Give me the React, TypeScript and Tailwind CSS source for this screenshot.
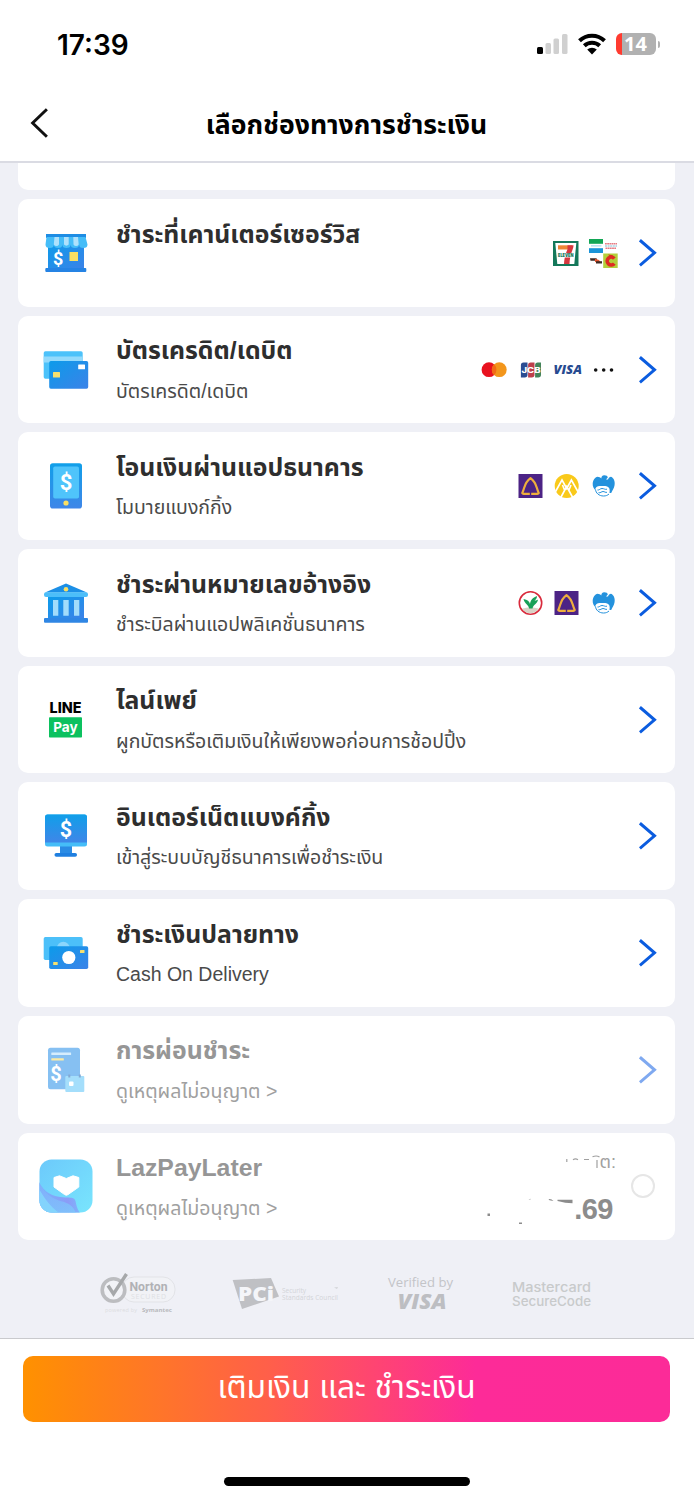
import type { ReactNode } from "react";

interface PaymentMethod {
  id: string;
  title: string;
  subtitle?: string;
  icon: ReactNode;
  logos?: ReactNode[];
  disabled?: boolean;
}

// ---------- shared ----------

function Gradients() {
  return (
    <svg className="absolute h-0 w-0">
      <defs>
        <linearGradient id="blue" x1="0" y1="0" x2="1" y2="1">
          <stop offset="0" stopColor="#0c9bea" />
          <stop offset="1" stopColor="#3b82e8" />
        </linearGradient>
        <linearGradient id="blueDown" x1="0" y1="0" x2="0" y2="1">
          <stop offset="0" stopColor="#109fe9" />
          <stop offset="1" stopColor="#3f86e8" />
        </linearGradient>
        <linearGradient id="laz" x1="0" y1="0" x2="1" y2="1">
          <stop offset="0" stopColor="#6cc9fb" />
          <stop offset="1" stopColor="#79e5fd" />
        </linearGradient>
        <linearGradient id="lazWave" x1="0" y1="0" x2="1" y2="0">
          <stop offset="0" stopColor="#78b4fb" />
          <stop offset="0.7" stopColor="#8b9cf7" />
          <stop offset="1" stopColor="#7fb4fb" />
        </linearGradient>
        <linearGradient id="lazFold" x1="0" y1="0" x2="0.6" y2="1">
          <stop offset="0" stopColor="#86a9fb" />
          <stop offset="1" stopColor="#7ccbfc" />
        </linearGradient>
      </defs>
    </svg>
  );
}

function IconBox({ children }: { children: ReactNode }) {
  return (
    <svg viewBox="0 0 60 60" className="h-[60px] w-[60px] shrink-0">
      {children}
    </svg>
  );
}

function LogoBox({ children }: { children: ReactNode }) {
  return (
    <svg viewBox="0 0 28 28" className="h-7 w-7 shrink-0 overflow-visible">
      {children}
    </svg>
  );
}

function Dollar({ x, y, size = 20 }: { x: number; y: number; size?: number }) {
  return (
    <text
      x={x}
      y={y + size * 0.35}
      textAnchor="middle"
      fontSize={size}
      fontWeight="700"
      fill="#fff"
      fontFamily="Roboto, sans-serif"
    >
      $
    </text>
  );
}

function Chevron({ disabled }: { disabled?: boolean }) {
  return (
    <svg viewBox="0 0 18 28" className="h-7 w-[18px] shrink-0" fill="none">
      <path d="M.9 1.200 15.500 13.800.9 26.400" stroke={disabled ? "#7fa9f0" : "#0b5cdf"} strokeWidth="3" />
    </svg>
  );
}

// ---------- method icons ----------

const storeIcon = (
  <IconBox>
    <path d="M12 20h36v26H12z" fill="url(#blue)" />
    <rect x="9.300" y="45" width="41" height="4" rx="1" fill="#2583e4" />
    <path d="M10 11h40v4H10z" fill="#1e8de4" />
    <path d="M10.500 14h39l2 7.500a4.200 3.500 0 0 1-8.400 0 4.200 3.500 0 0 1-8.400 0 4.200 3.500 0 0 1-8.400 0 4.200 3.500 0 0 1-8.400 0 4.200 3.500 0 0 1-8.400 0z" fill="#45bdf8" />
    <path d="M18.500 14h4.500v7.500a3 3 0 0 1-5.200 0zM28 14h4.700v7.500a3 3 0 0 1-4.700 0zM37.300 14H42l.7 7.500a3 3 0 0 1-5.200 0z" fill="#aee1fc" />
    <Dollar x={22.200} y={35.500} size={18} />
    <rect x="33.500" y="29" width="8.500" height="9" fill="#fbdf62" />
  </IconBox>
);

const cardsIcon = (
  <IconBox>
    <rect x="7.700" y="11.200" width="39" height="27.500" rx="1.700" fill="#4cc2fa" />
    <path d="M7.700 16.500h39v6h-39z" fill="#93dafc" />
    <rect x="13.200" y="21" width="39" height="27.800" rx="1.700" fill="url(#blue)" />
    <rect x="42.200" y="24.500" width="6.800" height="4.800" rx="0.500" fill="#fff" />
    <rect x="17" y="32" width="7" height="5.500" rx="0.500" fill="#f7e06f" />
  </IconBox>
);

const mobileIcon = (
  <IconBox>
    <rect x="14" y="7.200" width="32" height="45.300" rx="2.800" fill="url(#blueDown)" />
    <rect x="17.200" y="10.500" width="25.800" height="32" rx="1.800" fill="#4fc4fb" />
    <Dollar x={30} y={26} size={22} />
    <circle cx="30" cy="47" r="2.600" fill="#fbdf62" />
  </IconBox>
);

const bankIcon = (
  <IconBox>
    <path d="M30 10.500 51 19.500H9z" fill="#1c8fe6" />
    <rect x="8" y="19.300" width="44" height="4.700" rx="2" fill="#4cbef9" />
    <path d="M12 24h36v21H12z" fill="url(#blue)" />
    <path d="M17 27h5.300v15.700H17zM27.300 27h5.400v15.700h-5.400zM38 27h5.300v15.700H38z" fill="#a2dcfb" />
    <rect x="8" y="45" width="44" height="4.700" rx="1" fill="#2f86e4" />
    <circle cx="30" cy="16.200" r="2.300" fill="#fbdf62" />
  </IconBox>
);

const linePayIcon = (
  <IconBox>
    <text x="13.500" y="23.300" fontSize="14" fontWeight="800" textLength="32" lengthAdjust="spacingAndGlyphs" fill="#000" fontFamily="Inter, sans-serif">
      LINE
    </text>
    <rect x="13" y="27.300" width="33" height="20.200" rx="0.800" fill="#0cc15f" />
    <text x="17.200" y="42" fontSize="13.500" fontWeight="700" textLength="24.500" lengthAdjust="spacingAndGlyphs" fill="#fff" fontFamily="Inter, sans-serif">
      Pay
    </text>
  </IconBox>
);

const monitorIcon = (
  <IconBox>
    <path d="M24 40h12v7H24z" fill="#2a8be4" />
    <rect x="18.500" y="47" width="22.500" height="3.700" rx="1.800" fill="#1f7fe0" />
    <rect x="9" y="8.500" width="42" height="32" rx="2.500" fill="#45bdf8" />
    <path d="M9 11a2.500 2.500 0 0 1 2.500-2.500h37A2.500 2.500 0 0 1 51 11v25.500H9z" fill="url(#blueDown)" />
    <Dollar x={30} y={23} size={21.500} />
  </IconBox>
);

const cashIcon = (
  <IconBox>
    <rect x="7.700" y="14" width="39" height="23" rx="1.700" fill="#4cc0f9" />
    <circle cx="27.300" cy="25.300" r="6.500" fill="#8bd6fc" />
    <rect x="13.200" y="23.300" width="39" height="22.700" rx="1.700" fill="url(#blue)" />
    <circle cx="32.800" cy="34.500" r="6.600" fill="#fff" />
    <rect x="44" y="27" width="4.500" height="3" rx="0.500" fill="#f7e06f" />
    <rect x="17.200" y="39" width="4.500" height="3" rx="0.500" fill="#f7e06f" />
  </IconBox>
);

const installmentIcon = (
  <IconBox>
    <rect x="12" y="7.700" width="32" height="41.500" rx="2.500" fill="#86c0f2" />
    <rect x="15.300" y="12.500" width="19.800" height="2.400" rx="0.500" fill="#d5edfd" />
    <rect x="15.300" y="18.200" width="12.500" height="2.400" rx="0.500" fill="#fbeba5" />
    <Dollar x={20} y={33.500} size={20} />
    <rect x="29.300" y="36" width="19" height="16" rx="1" fill="#a4defb" />
    <path d="M33.300 34.500v3M43.800 34.500v3" stroke="#83a9d4" strokeWidth="2" />
    <rect x="33" y="41.500" width="4.500" height="4.500" rx="1" fill="#fff" />
  </IconBox>
);

const lazIcon = (
  <IconBox>
    <clipPath id="lazClip">
      <rect x="3.500" y="3.500" width="53" height="53" rx="12" />
    </clipPath>
    <g clipPath="url(#lazClip)">
      <path d="M3 3h54v54H3z" fill="url(#laz)" />
      <path d="M3 26c5 10 13 15 26 15.500 5 .2 9.500-.5 10.500 3.500.8 4 1.500 8 4.500 12H3z" fill="url(#lazWave)" />
      <path d="M3 26c5 12 14 17 23 19.500 6 1.500 11 4 14 11.500H3z" fill="url(#lazFold)" opacity="0.700" />
      <path d="M3 33c6 10 11 17 20 24H3z" fill="#84d9fd" opacity="0.800" />
    </g>
    <path d="M18 21.500 23.500 19.800 30.300 22.500 37 19.800 42.800 21.500V31L32 38.600Q30.300 39.900 28.600 38.600L18 31z" fill="#fff" stroke="#fff" strokeWidth="1" strokeLinejoin="round" />
  </IconBox>
);

// ---------- brand logos ----------

const sevenElevenLogo = (
  <LogoBox>
    <path d="M0 2h25.500v25H0z" fill="#14785a" />
    <path d="M2.300 4h21l-2 21H4.300z" fill="#fff" />
    <path d="M5 6.300h14v4.200H5z" fill="#ee8636" />
    <path d="M14.500 6.300h6c0 5-3.500 7-4 18.700h-5.500c.3-7 2-11 3.500-14.700z" fill="#d6383f" />
    <path d="M4.500 14.200h16.500v4.300H4.500z" fill="#fff" />
    <text x="5" y="18.200" fontSize="5.300" fontWeight="900" textLength="15.500" lengthAdjust="spacingAndGlyphs" fill="#14785a" fontFamily="Inter, sans-serif">
      ELEVEN
    </text>
  </LogoBox>
);

const storesLogo = (
  <LogoBox>
    <path d="M-1 0h14v4.800H-1z" fill="#12a655" />
    <path d="M1 6.900h10.500" stroke="#7cc8e8" strokeWidth="0.800" />
    <path d="M-1 9.200h14v4.800H-1z" fill="#1a94d8" />
    <path d="M15 4.800h12M15.500 9.200h10.500" stroke="#e57b84" strokeWidth="1.600" strokeDasharray="1.800 .4" />
    <path d="M15 7h12" stroke="#79bdd5" strokeWidth="1" strokeDasharray="2 .6" />
    <path d="M0 19.200h6.500l1 2.600H.5z" fill="#3d2a24" />
    <path d="M5 19.800 9 21l2 3-6-1z" fill="#e8552d" />
    <path d="M6 22.200h6v2.300H6z" fill="#3d2a24" />
    <path d="M13.200 14.500h14.500V29H13.200z" fill="#b3cf3b" />
    <path d="M24.300 19.500a4 4 0 1 0 0 5" fill="none" stroke="#df2b22" strokeWidth="3.600" />
    <path d="M18 15.500l5 .8-2 2.500z" fill="#df2b22" />
  </LogoBox>
);

const mastercardLogo = (
  <LogoBox>
    <circle cx="9" cy="13.700" r="7.400" fill="#e8121f" />
    <circle cx="19.300" cy="13.700" r="7.400" fill="#f3961c" />
    <path d="M14.100 8.300a7.400 7.400 0 0 1 0 10.800 7.400 7.400 0 0 1 0-10.800z" fill="#f26a16" />
  </LogoBox>
);

const jcbLogo = (
  <LogoBox>
    <path d="M6.500 6.500h4v12.300a2.700 2.700 0 0 1-2.700 2.700H3.900V9.200a2.700 2.700 0 0 1 2.600-2.700z" fill="#2b4d92" />
    <path d="M13.700 6.500h3.800v12.300a2.700 2.700 0 0 1-2.700 2.700h-3.700V9.200a2.700 2.700 0 0 1 2.600-2.700z" fill="#bd3f4b" />
    <path d="M20.800 6.500H24v12.300a2.700 2.700 0 0 1-2.700 2.700h-3.200V9.200a2.700 2.700 0 0 1 2.600-2.700z" fill="#43845a" />
    <text x="4.500" y="16.900" fontSize="7.600" fontWeight="800" textLength="19" lengthAdjust="spacingAndGlyphs" fill="#fff" fontFamily="Inter, sans-serif">
      JCB
    </text>
  </LogoBox>
);

const visaLogo = (
  <LogoBox>
    <text x="0.500" y="18.200" fontSize="12.500" fontWeight="800" fontStyle="italic" textLength="28.500" lengthAdjust="spacingAndGlyphs" fill="#274b91" fontFamily="Open Sans, sans-serif">
      VISA
    </text>
  </LogoBox>
);

const moreLogo = (
  <LogoBox>
    <circle cx="5.700" cy="14" r="1.800" fill="#111" />
    <circle cx="13.700" cy="14" r="1.800" fill="#111" />
    <circle cx="21.500" cy="14" r="1.800" fill="#111" />
  </LogoBox>
);

const scbLogo = (
  <LogoBox>
    <path d="M1.500 2h24v24h-24z" fill="#4c2385" />
    <path d="M12.800 21.800H6.600c-1.400 0-1.600-.8-1-1.700 2.200-4 1.400-9.300 7.900-14 6.500 4.700 5.700 10 7.900 14 .6.900.4 1.700-1 1.700h-6.200" fill="none" stroke="#eeae3d" strokeWidth="2.200" strokeLinejoin="round" />
  </LogoBox>
);

const krungsriLogo = (
  <LogoBox>
    <circle cx="13.700" cy="14" r="12" fill="#f9c91a" />
    <path d="M2 20.500 9 8l4.700 8.500L18.400 8l7 12.500M7.500 26l6.200-11.500L20 26M9.500 13l2 5M18 13l-2 5" fill="none" stroke="#fff" strokeWidth="1.600" />
  </LogoBox>
);

const krungthaiLogo = (
  <LogoBox>
    <path d="M7.500 4.700C9 4.700 10.500 5.500 11.300 6.500c0-2 .9-3.300 3-3.300 2 0 3.300.8 3.500 2.300L16 7.500h2c.8-1.700 1.500-2.700 3-2.700C24 6 25.300 10 24.500 13.500c-.5 3-2 4.500-3.300 7.500h-1.700c.5-3.500.2-5.500-2.300-6.500-3-1-5-.3-7.500-.5-2.500 0-4.500 1.500-4.500 4C3.700 16.500 2.500 14.500 2.700 11.500 3 8 5 5.200 7.500 4.700z" fill="#2492dd" />
    <path d="M5.500 17.500c.3 3.500 3.500 6.500 8 6.500 2.500 0 4-.7 5.500-2M7.500 18c2 .3 2.500-1.500 4.500-1.500s3 1.300 5 .7M8.500 20.700c2 .5 3-1.200 4.500-1.200s2.500 1.300 4 .8" fill="none" stroke="#2492dd" strokeWidth="1" />
  </LogoBox>
);

const kbankLogo = (
  <LogoBox>
    <circle cx="13.500" cy="14" r="11.200" fill="#fff" stroke="#d92a3c" strokeWidth="1.600" />
    <path d="M5.500 19.500c4-1.500 12-1.500 16 0-2 3.500-5 4.700-8 4.700s-6.500-1.200-8-4.700z" fill="#d8d2c6" />
    <path d="M12 19.500c0-3.500-4.500-4.500-5.500-9.500 4 .5 6 2.500 6.500 5 .5-3.500 2.500-6.500 7-8 0 2-1 3.500-2.500 4.500 1.500 0 2.500-.3 3.500-1-.5 4.500-5 5-5.500 9z" fill="#18a058" />
  </LogoBox>
);

const methods: PaymentMethod[] = [
  {
    id: "counter",
    title: "ชำระที่เคาน์เตอร์เซอร์วิส",
    icon: storeIcon,
    logos: [sevenElevenLogo, storesLogo],
  },
  {
    id: "card",
    title: "บัตรเครดิต/เดบิต",
    subtitle: "บัตรเครดิต/เดบิต",
    icon: cardsIcon,
    logos: [mastercardLogo, jcbLogo, visaLogo, moreLogo],
  },
  {
    id: "mobile",
    title: "โอนเงินผ่านแอปธนาคาร",
    subtitle: "โมบายแบงก์กิ้ง",
    icon: mobileIcon,
    logos: [scbLogo, krungsriLogo, krungthaiLogo],
  },
  {
    id: "bill",
    title: "ชำระผ่านหมายเลขอ้างอิง",
    subtitle: "ชำระบิลผ่านแอปพลิเคชั่นธนาคาร",
    icon: bankIcon,
    logos: [kbankLogo, scbLogo, krungthaiLogo],
  },
  {
    id: "linepay",
    title: "ไลน์เพย์",
    subtitle: "ผูกบัตรหรือเติมเงินให้เพียงพอก่อนการช้อปปิ้ง",
    icon: linePayIcon,
  },
  {
    id: "internet",
    title: "อินเตอร์เน็ตแบงค์กิ้ง",
    subtitle: "เข้าสู่ระบบบัญชีธนาคารเพื่อชำระเงิน",
    icon: monitorIcon,
  },
  {
    id: "cod",
    title: "ชำระเงินปลายทาง",
    subtitle: "Cash On Delivery",
    icon: cashIcon,
  },
  {
    id: "installment",
    title: "การผ่อนชำระ",
    subtitle: "ดูเหตุผลไม่อนุญาต >",
    icon: installmentIcon,
    disabled: true,
  },
];

function MethodText({ title, subtitle, disabled }: Partial<PaymentMethod>) {
  return (
    <div className="ml-5 flex h-full flex-1 flex-col whitespace-nowrap pt-[17.500px]">
      <div className={`h-9 text-[24.800px] leading-9 font-bold ${disabled ? "text-[#969696]" : "text-[#2e2e2e]"}`}>
        {title}
      </div>
      <div className={`mt-[6.500px] h-[30px] text-[19.500px] leading-[30px] ${disabled ? "text-[#a0a0a0]" : "text-[#4a4a4a]"}`}>
        {subtitle}
      </div>
    </div>
  );
}

function MethodCard({ method }: { method: PaymentMethod }) {
  return (
    <div className="flex h-[107.700px] shrink-0 items-center rounded-[10px] bg-white pr-[18.500px] pl-[18px]">
      {method.icon}
      <MethodText {...method} />
      <div className="mr-[20.500px] flex gap-[8.600px]">
        {method.logos?.map((logo, i) => <span key={i}>{logo}</span>)}
      </div>
      <Chevron disabled={method.disabled} />
    </div>
  );
}

function LazPayLaterCard() {
  return (
    <div className="flex h-[107.700px] shrink-0 items-center rounded-[10px] bg-white pr-5 pl-[18px]">
      {lazIcon}
      <MethodText title="LazPayLater" subtitle="ดูเหตุผลไม่อนุญาต >" disabled />
      <div className="mr-[15px] flex h-full w-[132px] flex-col items-end pt-[15px]">
        <div className="flex h-[30px] items-center text-[18px] text-[#a0a0a0]">
          {/* only the tips of the leading letters show */}
          <svg viewBox="0 0 34 24" className="h-6 w-[34px]" fill="none" stroke="#a0a0a0">
            <path d="M.8 8v3M7 8.700q2.500-1.500 5 0M18 8.500h5" strokeWidth="1.200" />
            <path d="M26.500 5.800q4-1.700 7 .2M31 9v8" strokeWidth="1.200" />
          </svg>
          <span>ต:</span>
        </div>
        <div className="mt-[14px] flex h-9 w-full items-center justify-end pr-[3px] text-[29px] font-bold tracking-[-0.500px] text-[#8c8c8c]">
          <svg viewBox="0 0 88 36" className="h-9 w-[88px]">
            <path d="M1.500 21.500H4V24H1.500zM33 30.500h3V32h-3zM42.500 7.500l2-.8v.8zM62.500 7q3-.5 5 2l-4-.7zM71.500 7.700h15v3.500q-7 0-15-2.200z" fill="#8c8c8c" />
          </svg>
          <span>.69</span>
        </div>
      </div>
      <span className="h-6 w-6 shrink-0 rounded-full border-2 border-[#e6e6e6]" />
    </div>
  );
}

function StatusBar() {
  return (
    <div className="flex h-[88px] items-center justify-between pr-[34px] pl-[57px]">
      <span className="pt-px font-['Inter'] text-[28px] font-semibold text-black">17:39</span>
      <div className="flex items-center gap-[9.500px]">
        <svg viewBox="0 0 31 22" className="h-[22px] w-[31px] overflow-visible">
          <rect x="-1" y="14" width="6" height="7" rx="1.500" fill="#000" />
          <rect x="7.500" y="10" width="5.500" height="11" rx="1.500" fill="#d0d0d0" />
          <rect x="15.500" y="5.500" width="5.500" height="15.500" rx="1.500" fill="#d0d0d0" />
          <rect x="24" y="1" width="5.500" height="20" rx="1.500" fill="#d0d0d0" />
        </svg>
        <svg viewBox="0 0 28 22" className="h-[22px] w-7">
          <path d="M1.500 7.800a18 18 0 0 1 25 0M6.300 12.800a11.300 11.300 0 0 1 15.400 0" fill="none" stroke="#000" strokeWidth="4" />
          <path d="M9.200 16.500a7.300 7.300 0 0 1 9.600 0L14 21.500z" fill="#000" />
        </svg>
        <div className="flex items-center gap-0.5">
          <div className="flex h-[22px] w-10 items-center justify-center rounded-[6px] border-l-[6px] border-[#ff3b30] bg-[#b1b1b1]">
            <span className="pr-1.5 font-['Open_Sans'] text-[20px] leading-none font-bold text-white">14</span>
          </div>
          <span className="h-[7px] w-[2.500px] rounded-r-full bg-[#b1b1b1]" />
        </div>
      </div>
    </div>
  );
}

function TrustBadges() {
  return (
    <div className="flex h-[106px] shrink-0 items-center pl-[82px]">
      {/* Norton */}
      <svg viewBox="0 0 80 44" className="h-11 w-20" fontFamily="Open Sans, sans-serif">
        <rect x="22" y="6" width="53" height="25" rx="12" fill="#f1f2f6" stroke="#e2e3e7" />
        <circle cx="13.500" cy="19" r="11.300" fill="#f2f3f7" stroke="#bcbdc0" strokeWidth="3.600" />
        <path d="M8 14.500l5.500 8.500L26.500 3" fill="none" stroke="#a6a8aa" strokeWidth="3.400" />
        <text x="29.500" y="19.500" fontSize="12" fontWeight="700" textLength="38" lengthAdjust="spacingAndGlyphs" fill="#b0b1b5" fontFamily="Roboto, sans-serif">Norton</text>
        <text x="31" y="28" fontSize="7" textLength="35" fill="#dedfe3">SECURED</text>
        <text x="5" y="41" fontSize="5.500" textLength="32" fill="#dcdde1">powered by</text>
        <text x="42" y="41" fontSize="6" fontWeight="700" textLength="30" lengthAdjust="spacingAndGlyphs" fill="#b9babd">Symantec</text>
      </svg>
      {/* PCI */}
      <svg viewBox="0 0 112 44" className="ml-[52px] h-11 w-28" fontFamily="Open Sans, sans-serif">
        <path d="M.7 9 39 7l8 18.500L10 38z" fill="#bfc0c4" />
        <text x="6" y="30" fontSize="20" fontWeight="800" textLength="36" lengthAdjust="spacingAndGlyphs" fill="#f4f5f9">PCi</text>
        <text x="50" y="22" fontSize="6.500" textLength="24" fill="#d3d4d8">Security</text>
        <text x="50" y="28.800" fontSize="6.500" textLength="56" fill="#d3d4d8">Standards Council</text>
        <path d="M102 16.500l3 1.500 1-2z" fill="#d3d4d8" />
      </svg>
      {/* Verified by Visa */}
      <svg viewBox="0 0 68 44" className="ml-[42px] h-11 w-[68px]" fontFamily="Open Sans, sans-serif">
        <text x="2" y="15.800" fontSize="13" textLength="65" lengthAdjust="spacingAndGlyphs" fill="#c3c4c8">Verified by</text>
        <text x="11.500" y="38" fontSize="21" fontWeight="800" fontStyle="italic" textLength="49" lengthAdjust="spacingAndGlyphs" fill="#bdbec2">VISA</text>
      </svg>
      {/* Mastercard SecureCode */}
      <svg viewBox="0 0 82 44" className="ml-[56px] h-11 w-[82px]" fontFamily="Inter, sans-serif" fontWeight="500">
        <text x="2" y="21" fontSize="13" textLength="79" lengthAdjust="spacingAndGlyphs" fill="#c8cacb">Mastercard</text>
        <text x="2" y="35" fontSize="13" textLength="79" lengthAdjust="spacingAndGlyphs" fill="#c8cacb">SecureCode</text>
      </svg>
    </div>
  );
}

export default function App() {
  return (
    <div className="flex h-[1500px] w-[694px] flex-col overflow-hidden bg-white font-['Liberation_Sans','Noto_Sans_Thai','Noto_Sans',sans-serif]">
      <Gradients />
      <StatusBar />

      {/* header */}
      <header className="grid h-[75px] shrink-0 grid-cols-[72px_1fr_72px] items-center border-b-2 border-[#dadbe3] pr-px">
        <svg viewBox="0 0 18 28" className="mb-[4px] ml-[30px] h-[30px] w-[19px]" fill="none">
          <path d="M16 1 2.500 14 16 27" stroke="#111" strokeWidth="2.800" />
        </svg>
        <h1 className="text-center text-[26.600px] leading-9 font-bold text-black">เลือกช่องทางการชำระเงิน</h1>
      </header>

      <main className="flex h-[1175px] shrink-0 flex-col overflow-hidden bg-[#eff0f6] pr-[19px] pl-[18px]">
        <div className="h-[27px] shrink-0 rounded-b-[10px] bg-white" />
        <div className="mt-[9px] flex shrink-0 flex-col gap-[9px]">
          {methods.map((m) => (
            <MethodCard key={m.id} method={m} />
          ))}
          <LazPayLaterCard />
        </div>
        <TrustBadges />
      </main>

      <footer className="flex flex-1 flex-col items-center border-t border-[#c9cacd] bg-white pt-[17px] pr-px">
        <button className="h-[66px] w-[647px] rounded-[10px] bg-[linear-gradient(90deg,#ff9100_0%,#ff5f4a_38%,#fd2b98_70%,#fc2b98_100%)] pb-0.5 text-[31.700px] text-white">
          เติมเงิน และ ชำระเงิน
        </button>
        <div className="mt-[55px] h-[9px] w-[246px] rounded-full bg-black" />
      </footer>
    </div>
  );
}
